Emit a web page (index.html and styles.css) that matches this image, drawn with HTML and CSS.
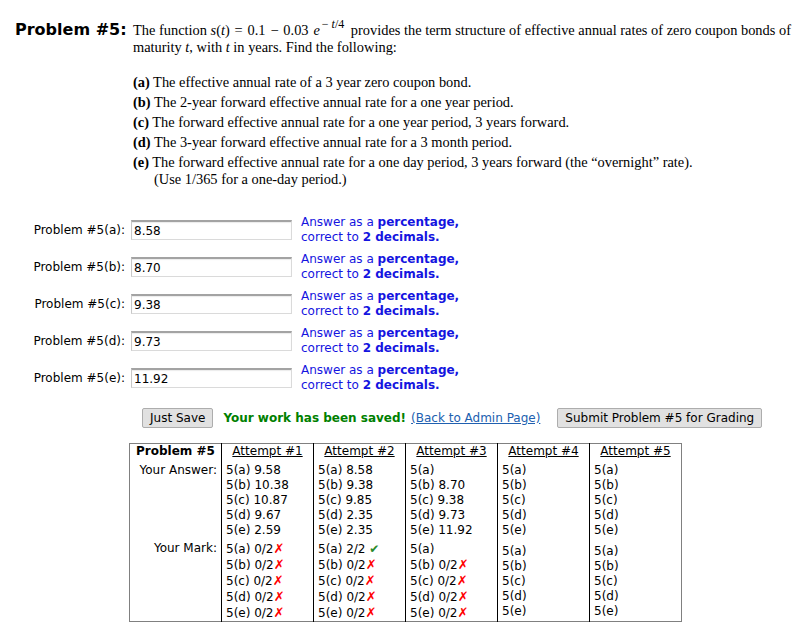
FILE: index.html
```html
<!DOCTYPE html>
<html>
<head>
<meta charset="utf-8">
<title>Problem #5</title>
<link rel="stylesheet" href="styles.css">
</head>
<body>
<div class="problem">
  <div class="ptitle">Problem #5:</div>
  <div class="pbody">
    <p class="intro">The function <span class="math"><i>s</i>(<i>t</i>) = 0.1 − 0.03 <i>e</i><sup>− <i>t</i>/4</sup></span> provides the term structure of effective annual rates of zero coupon bonds of maturity <i>t</i>, with <i>t</i> in years. Find the following:</p>
    <ul class="parts">
      <li><b>(a)</b> The effective annual rate of a 3 year zero coupon bond.</li>
      <li><b>(b)</b> The 2-year forward effective annual rate for a one year period.</li>
      <li><b>(c)</b> The forward effective annual rate for a one year period, 3 years forward.</li>
      <li><b>(d)</b> The 3-year forward effective annual rate for a 3 month period.</li>
      <li><b>(e)</b> The forward effective annual rate for a one day period, 3 years forward (the “overnight” rate).<br>(Use 1/365 for a one-day period.)</li>
    </ul>
  </div>
</div>

<div class="answers">
  <label class="alabel" for="a5a">Problem #5(a):</label>
  <input class="ainput" id="a5a" type="text" value="8.58">
  <div class="hint">Answer as a <b>percentage,</b><br>correct to <b>2 decimals.</b></div>

  <label class="alabel" for="a5b">Problem #5(b):</label>
  <input class="ainput" id="a5b" type="text" value="8.70">
  <div class="hint">Answer as a <b>percentage,</b><br>correct to <b>2 decimals.</b></div>

  <label class="alabel" for="a5c">Problem #5(c):</label>
  <input class="ainput" id="a5c" type="text" value="9.38">
  <div class="hint">Answer as a <b>percentage,</b><br>correct to <b>2 decimals.</b></div>

  <label class="alabel" for="a5d">Problem #5(d):</label>
  <input class="ainput" id="a5d" type="text" value="9.73">
  <div class="hint">Answer as a <b>percentage,</b><br>correct to <b>2 decimals.</b></div>

  <label class="alabel" for="a5e">Problem #5(e):</label>
  <input class="ainput" id="a5e" type="text" value="11.92">
  <div class="hint">Answer as a <b>percentage,</b><br>correct to <b>2 decimals.</b></div>
</div>

<div class="actions">
  <button class="btn" type="button">Just Save</button>
  <span class="saved">Your work has been saved!</span>
  <a class="back" href="#">(Back to Admin Page)</a>
  <button class="btn submit" type="button">Submit Problem #5 for Grading</button>
</div>

<table class="hist">
  <colgroup><col><col><col><col><col><col></colgroup>
  <tr class="hrow">
    <th class="first">Problem #5</th>
    <th><a class="att" href="#">Attempt #1</a></th>
    <th><a class="att" href="#">Attempt #2</a></th>
    <th><a class="att" href="#">Attempt #3</a></th>
    <th><a class="att" href="#">Attempt #4</a></th>
    <th><a class="att" href="#">Attempt #5</a></th>
  </tr>
  <tr class="arow">
    <td class="rl">Your Answer:</td>
    <td><div>5(a) 9.58</div><div>5(b) 10.38</div><div>5(c) 10.87</div><div>5(d) 9.67</div><div>5(e) 2.59</div></td>
    <td><div>5(a) 8.58</div><div>5(b) 9.38</div><div>5(c) 9.85</div><div>5(d) 2.35</div><div>5(e) 2.35</div></td>
    <td><div>5(a)</div><div>5(b) 8.70</div><div>5(c) 9.38</div><div>5(d) 9.73</div><div>5(e) 11.92</div></td>
    <td><div>5(a)</div><div>5(b)</div><div>5(c)</div><div>5(d)</div><div>5(e)</div></td>
    <td><div>5(a)</div><div>5(b)</div><div>5(c)</div><div>5(d)</div><div>5(e)</div></td>
  </tr>
  <tr class="mrow">
    <td class="rl">Your Mark:</td>
    <td><div class="mk">5(a) 0/2<span class="no">✗</span></div><div class="mk">5(b) 0/2<span class="no">✗</span></div><div class="mk">5(c) 0/2<span class="no">✗</span></div><div class="mk">5(d) 0/2<span class="no">✗</span></div><div class="mk">5(e) 0/2<span class="no">✗</span></div></td>
    <td><div class="mk">5(a) 2/2 <span class="ok">✔</span></div><div class="mk">5(b) 0/2<span class="no">✗</span></div><div class="mk">5(c) 0/2<span class="no">✗</span></div><div class="mk">5(d) 0/2<span class="no">✗</span></div><div class="mk">5(e) 0/2<span class="no">✗</span></div></td>
    <td><div>5(a)</div><div class="mk">5(b) 0/2<span class="no">✗</span></div><div class="mk">5(c) 0/2<span class="no">✗</span></div><div class="mk">5(d) 0/2<span class="no">✗</span></div><div class="mk">5(e) 0/2<span class="no">✗</span></div></td>
    <td><div>5(a)</div><div>5(b)</div><div>5(c)</div><div>5(d)</div><div>5(e)</div></td>
    <td><div>5(a)</div><div>5(b)</div><div>5(c)</div><div>5(d)</div><div>5(e)</div></td>
  </tr>
</table>
</body>
</html>
```

FILE: styles.css
```css
body {
  margin: 0;
  font-family: "DejaVu Sans", Verdana, sans-serif;
  font-size: 12px;
  color: #000;
  background: #fff;
}

.problem {
  display: flex;
  align-items: baseline;
  padding: 21px 0 0 15px;
}

.ptitle {
  flex: none;
  width: 118px;
  font-weight: bold;
  font-size: 16px;
  line-height: 17px;
}

.pbody {
  flex: 1;
  font-family: "Liberation Serif", "Times New Roman", serif;
  font-size: 14.4px;
  line-height: 17px;
}

.intro {
  margin: 0;
}

.math {
  word-spacing: 1.25px;
}

.intro sup {
  font-size: 12px;
  line-height: 0;
  vertical-align: 7px;
  margin-left: 2px;
  margin-right: 3px;
  word-spacing: 0;
}

.parts {
  list-style: none;
  margin: 18px 0 0;
  padding: 0;
}

.parts li {
  margin-bottom: 3px;
  padding-left: 21px;
  text-indent: -21px;
}

.answers {
  display: grid;
  grid-template-columns: 125px 161px auto;
  column-gap: 6px;
  row-gap: 7px;
  align-items: center;
  margin-top: 24px;
}

.alabel {
  text-align: right;
  line-height: 15px;
}

.ainput {
  box-sizing: border-box;
  width: 161px;
  height: 20px;
  margin: 0;
  padding: 0 2px;
  border: 1px solid #dadada;
  border-top: 2px solid #a3a3a3;
  border-left-color: #c8c8c8;
  background: #fff;
  box-shadow: inset 0 1px 1px rgba(0, 0, 0, 0.08);
  font: 12px "DejaVu Sans", Verdana, sans-serif;
  color: #000;
}

.hint {
  margin-left: 3px;
  line-height: 15px;
  color: #1414e0;
}

.actions {
  display: flex;
  align-items: center;
  margin: 15px 0 0 142px;
}

.btn {
  margin: 0;
  padding: 2px 7px;
  border: 1px solid #adadad;
  border-radius: 2px;
  background: #e1e1e1;
  color: #000;
  font: 12px/14px "DejaVu Sans", Verdana, sans-serif;
}

.saved {
  margin-left: 10px;
  color: #008000;
  font-weight: bold;
}

.back {
  margin-left: 5px;
  color: #2060b0;
  text-decoration: underline;
}

.submit {
  margin-left: 17px;
}

.hist {
  margin: 15px 0 0 129px;
  width: 552px;
  table-layout: fixed;
  border-collapse: collapse;
  border: 1px solid #808080;
}

.hist col {
  width: 92px;
}

.hist th,
.hist td {
  padding: 0 4px;
  border-left: 1px solid #000;
  text-align: left;
  vertical-align: top;
  line-height: 15px;
  font-weight: normal;
}

.hist th:first-child,
.hist td:first-child {
  border-left: none;
}

.hist th.first {
  font-weight: bold;
  padding-left: 6px;
}

.hrow th {
  text-align: center;
}

.hrow th.first {
  text-align: left;
}

.att {
  color: #000;
  text-decoration: underline;
}

.arow td {
  padding-top: 4px;
}

.mrow td {
  padding-top: 3px;
  vertical-align: middle;
}

.mrow td.rl {
  vertical-align: top;
}

.hist td.rl {
  text-align: right;
  padding-right: 4px;
}

.mk {
  line-height: 16px;
}

.no {
  color: #ff0000;
  font-size: 13px;
  line-height: 0;
}

.ok {
  color: #2a8a2a;
  font-size: 12px;
  line-height: 0;
}
```
